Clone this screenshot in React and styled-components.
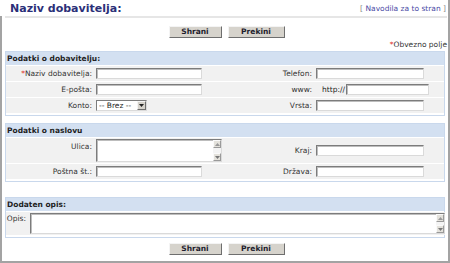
import React from 'react';
import styled, { createGlobalStyle } from 'styled-components';

const GlobalStyle = createGlobalStyle`
  html, body {
    margin: 0;
    padding: 0;
    background: #fff;
  }
  * {
    box-sizing: border-box;
  }
`;

const Page = styled.div`
  width: 450px;
  height: 263px;
  border-right: 2px solid #a3a3a3;
  border-bottom: 2px solid #a3a3a3;
  font-family: "DejaVu Sans", Verdana, sans-serif;
  font-size: 7.5px;
  color: #333;
  display: flex;
  flex-direction: column;
`;

const TitleBar = styled.div`
  height: 16px;
  display: flex;
  align-items: center;
  justify-content: space-between;
  padding: 1px 2px 0 10px;
`;

const Title = styled.h1`
  margin: 0;
  font-size: 11px;
  font-weight: bold;
  color: #2b2f78;
`;

const HelpLink = styled.div`
  font-size: 7.5px;
  color: #888;

  a {
    color: #4b4ba6;
    text-decoration: none;
  }
`;

const Body = styled.div`
  flex: 1;
  border-left: 2px solid #a3a3a3;
  padding: 0 3px 0 3px;
`;

const Rule = styled.div`
  height: 2px;
  background: #e6e6e6;
  margin-right: -2px;
`;

const ButtonRow = styled.div`
  display: flex;
  justify-content: center;
  gap: 6px;
  margin-top: ${(p) => p.$top}px;
  padding-left: 3px;
`;

const Button = styled.button`
  width: ${(p) => p.$width}px;
  height: 12px;
  padding: 0;
  font-family: "DejaVu Sans", Verdana, sans-serif;
  font-size: 7.5px;
  font-weight: bold;
  color: #1e1e2e;
  background: #d6d3cc;
  border: 1px solid;
  border-color: #f4f4f4 #6e6e6e #6e6e6e #f4f4f4;
  line-height: 10px;
`;

const Required = styled.div`
  text-align: right;
  margin-top: 3px;
  margin-right: -2px;
  height: 8px;
  line-height: 8px;

  span {
    color: #e0302a;
  }
`;

const Section = styled.div`
  border: 1px solid #c9d8ec;
  margin-top: ${(p) => p.$top}px;
  padding-bottom: 2px;
`;

const SectionHead = styled.div`
  height: 13px;
  line-height: 13px;
  background: #d3e0f1;
  font-weight: bold;
  color: #1e1e1e;
  padding-left: 1px;
`;

const Grid = styled.div`
  display: grid;
  grid-template-columns: 88px 132px 88px 1fr;
  row-gap: 1px;
  margin-top: 1px;
`;

const Label = styled.div`
  background: #f1f1f1;
  text-align: right;
  padding-right: 2px;
  height: ${(p) => p.$h || 15}px;
  display: flex;
  align-items: ${(p) => (p.$top ? 'flex-start' : 'center')};
  justify-content: flex-end;
  padding-top: ${(p) => p.$top || 0}px;

  span {
    color: #e0302a;
  }
`;

const Value = styled.div`
  background: #f1f1f1;
  height: ${(p) => p.$h || 15}px;
  display: flex;
  align-items: center;
  padding-left: 2px;
`;

const Input = styled.input`
  width: ${(p) => p.$w}px;
  height: 11px;
  padding: 0 2px;
  font-size: 7.5px;
  background: #fff;
  border: 1px solid;
  border-color: #7c7c7c #dadada #dadada #7c7c7c;
  box-shadow: inset 1px 1px 0 #bdbdbd;
  outline: none;
`;

const Prefix = styled.span`
  margin-left: 6px;
  margin-right: 1px;
  color: #222;
`;

const SelectWrap = styled.div`
  display: flex;
  align-items: center;
  width: 51px;
  height: 11px;
  background: #fff;
  border: 1px solid;
  border-color: #7c7c7c #dadada #dadada #7c7c7c;
`;

const Select = styled.select`
  flex: 1;
  appearance: none;
  border: none;
  background: transparent;
  font-family: "DejaVu Sans", Verdana, sans-serif;
  font-size: 7.5px;
  color: #222;
  padding: 0 0 0 2px;
  height: 9px;
  line-height: 9px;
  outline: none;
`;

const ArrowBox = styled.div`
  width: 9px;
  height: 9px;
  background: #d6d3cc;
  border: 1px solid;
  border-color: #f4f4f4 #6e6e6e #6e6e6e #f4f4f4;
  display: flex;
  align-items: center;
  justify-content: center;
`;

const AreaBox = styled.div`
  display: flex;
  width: ${(p) => p.$w}px;
  height: ${(p) => p.$h}px;
  background: #fff;
  border: 1px solid;
  border-color: #7c7c7c #dadada #dadada #7c7c7c;
  box-shadow: inset 1px 1px 0 #bdbdbd;
`;

const TextArea = styled.textarea`
  flex: 1;
  border: none;
  resize: none;
  background: transparent;
  outline: none;
  font-size: 7.5px;
`;

const ScrollBar = styled.div`
  width: 8px;
  display: flex;
  flex-direction: column;
  justify-content: space-between;
  background: #f4f4f4;
`;

const ScrollBtn = styled.div`
  height: 8px;
  background: #e4e2dc;
  border: 1px solid;
  border-color: #fafafa #9a9a9a #9a9a9a #fafafa;
  display: flex;
  align-items: center;
  justify-content: center;
`;

const OpisRow = styled.div`
  display: grid;
  grid-template-columns: 22px 1fr;
  margin-top: 1px;
`;

const Tri = ({ up, color = '#555' }) => (
  <svg width="5" height="3" viewBox="0 0 5 3">
    <polygon points={up ? '0,3 5,3 2.5,0' : '0,0 5,0 2.5,3'} fill={color} />
  </svg>
);

const Scroll = () => (
  <ScrollBar>
    <ScrollBtn><Tri up color="#999" /></ScrollBtn>
    <ScrollBtn><Tri color="#777" /></ScrollBtn>
  </ScrollBar>
);

export default function App() {
  return (
    <Page>
      <GlobalStyle />
      <TitleBar>
        <Title>Naziv dobavitelja:</Title>
        <HelpLink>[ <a href="#">Navodila za to stran</a> ]</HelpLink>
      </TitleBar>
      <Body>
        <Rule />
        <ButtonRow $top={8}>
          <Button $width={53}>Shrani</Button>
          <Button $width={57}>Prekini</Button>
        </ButtonRow>
        <Required><span>*</span>Obvezno polje</Required>

        <Section $top={2}>
          <SectionHead>Podatki o dobavitelju:</SectionHead>
          <Grid>
            <Label><span>*</span>Naziv dobavitelja:</Label>
            <Value><Input $w={106} /></Value>
            <Label>Telefon:</Label>
            <Value><Input $w={108} /></Value>

            <Label>E-pošta:</Label>
            <Value><Input $w={106} /></Value>
            <Label>www:</Label>
            <Value><Prefix>http://</Prefix><Input $w={83} /></Value>

            <Label>Konto:</Label>
            <Value>
              <SelectWrap>
                <Select defaultValue="">
                  <option value="">-- Brez --</option>
                </Select>
                <ArrowBox><Tri color="#222" /></ArrowBox>
              </SelectWrap>
            </Value>
            <Label>Vrsta:</Label>
            <Value><Input $w={108} /></Value>
          </Grid>
        </Section>

        <Section $top={7}>
          <SectionHead>Podatki o naslovu</SectionHead>
          <Grid>
            <Label $h={25} $top={4}>Ulica:</Label>
            <Value $h={25}><AreaBox $w={126} $h={23}><TextArea /><Scroll /></AreaBox></Value>
            <Label $h={25}>Kraj:</Label>
            <Value $h={25}><Input $w={108} /></Value>

            <Label>Poštna št.:</Label>
            <Value><Input $w={106} /></Value>
            <Label>Država:</Label>
            <Value><Input $w={108} /></Value>
          </Grid>
        </Section>

        <Section $top={15}>
          <SectionHead>Dodaten opis:</SectionHead>
          <OpisRow>
            <Label $h={23} $top={2}>Opis:</Label>
            <Value $h={23}><AreaBox $w={415} $h={21}><TextArea /><Scroll /></AreaBox></Value>
          </OpisRow>
        </Section>

        <ButtonRow $top={5}>
          <Button $width={53}>Shrani</Button>
          <Button $width={57}>Prekini</Button>
        </ButtonRow>
      </Body>
    </Page>
  );
}
